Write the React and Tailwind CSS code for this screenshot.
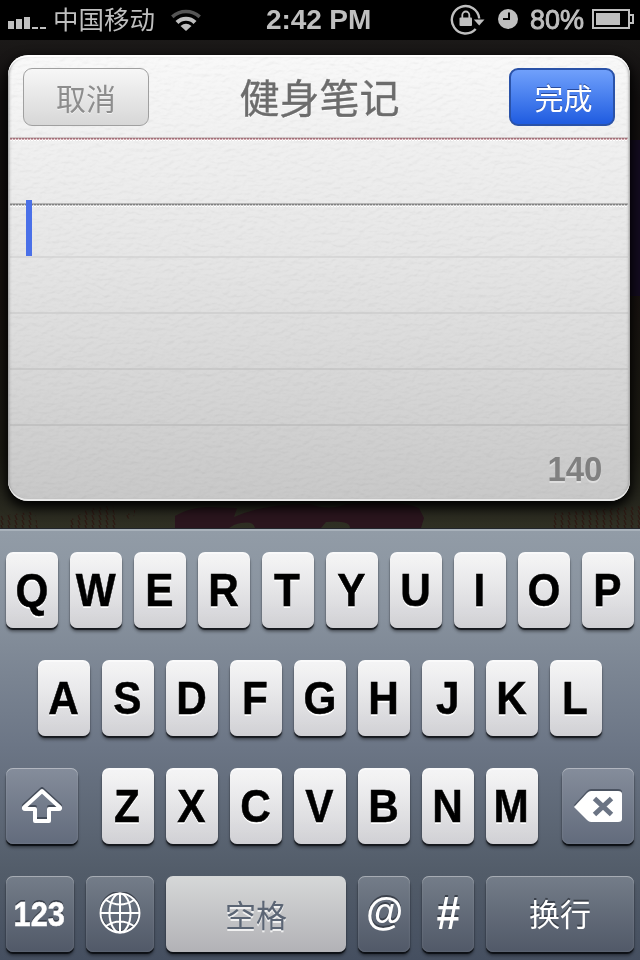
const LATIN = "font-['Liberation_Sans',Arial,sans-serif]";
const CJK = "font-['Noto_Sans_CJK_SC',sans-serif]";

function StatusBar() {
  return (
    <header className="flex h-10 shrink-0 items-center bg-black pl-2 pr-[6px] text-[#bfbfbf]">
      <div className="mt-[6px] flex h-3 w-[38px] shrink-0 items-end gap-[2px]">
        <i className="h-2 w-[6px] bg-[#bfbfbf]" />
        <i className="h-[10px] w-[6px] bg-[#bfbfbf]" />
        <i className="h-3 w-[6px] bg-[#bfbfbf]" />
        <i className="h-[2px] w-[6px] bg-[#bfbfbf]" />
        <i className="h-[2px] w-[6px] bg-[#bfbfbf]" />
      </div>
      <span className={`${CJK} ml-[7px] w-[105px] shrink-0 whitespace-nowrap pb-[4px] text-[25.5px] leading-[36px]`}>中国移动</span>
      <svg className="ml-3 shrink-0" width="32" height="24" viewBox="0 0 32 24" fill="none" stroke="#bfbfbf" strokeWidth="3.6">
        <path d="M2.3 8.8 A20.5 20.5 0 0 1 29.7 8.8" stroke="#555" />
        <path d="M7 14.5 A12.7 12.7 0 0 1 25 14.5" strokeWidth="4.2" />
        <path d="M16 23 L10.5 18 Q16 13.5 21.5 18Z" fill="#bfbfbf" stroke="none" />
      </svg>
      <time className={`${LATIN} ml-[64px] w-[107px] shrink-0 whitespace-nowrap text-[28px] font-bold leading-10 tracking-[-0.1px]`}>2:42 PM</time>
      <svg className="-mt-[2px] ml-[77px] mr-px shrink-0" width="36" height="32" viewBox="0 0 36 32" fill="none">
        <path d="M25.7 26 A13.7 13.7 0 1 1 29.2 15.5" stroke="#bfbfbf" strokeWidth="2.4" />
        <path d="M23.8 16.5 H34.5 L29.2 22.5Z" fill="#bfbfbf" />
        <rect x="9.5" y="14.5" width="12.5" height="8.5" rx="1" fill="#bfbfbf" />
        <path d="M12.3 15 V12 A3.5 3.5 0 0 1 19.3 12 V15" stroke="#bfbfbf" strokeWidth="1.8" />
      </svg>
      <svg className="-mt-[2px] ml-[11px] shrink-0" width="20" height="20" viewBox="0 0 20 20">
        <circle cx="10" cy="10" r="10" fill="#bfbfbf" />
        <path d="M11 3.5 V10 H5" fill="none" stroke="#000" strokeWidth="2" />
      </svg>
      <span className={`${LATIN} ml-[12px] w-[54px] shrink-0 whitespace-nowrap text-[27px] font-normal leading-10 [-webkit-text-stroke:0.9px_#bfbfbf]`}>80%</span>
      <svg className="-mt-[2px] ml-[8px] shrink-0" width="42" height="20" viewBox="0 0 42 20">
        <rect x="1" y="1" width="36" height="18" fill="none" stroke="#bfbfbf" strokeWidth="2" />
        <rect x="4" y="4" width="24" height="12" fill="#bfbfbf" />
        <path d="M38 6 H41 V14 H38" fill="none" stroke="#bfbfbf" strokeWidth="2" />
      </svg>
    </header>
  );
}

function Backdrop() {
  return (
    <svg className="absolute inset-0" width="640" height="488" viewBox="0 40 640 488">
      <defs>
        <linearGradient id="wall" x1="0" y1="0" x2="0" y2="1">
          <stop offset="0" stopColor="#1b1918" />
          <stop offset=".12" stopColor="#120f0f" />
          <stop offset=".5" stopColor="#17120f" />
          <stop offset=".85" stopColor="#1c1b13" />
          <stop offset=".94" stopColor="#26261d" />
          <stop offset="1" stopColor="#2f2f23" />
        </linearGradient>
        <pattern id="knit" width="7" height="5" patternUnits="userSpaceOnUse">
          <path d="M1 0 L3 5" stroke="#2c1a14" strokeWidth="1.4" />
        </pattern>
      </defs>
      <rect y="40" width="640" height="488" fill="url(#wall)" />
      <rect x="630" y="140" width="10" height="156" fill="#140c20" />
      <path d="M0 516 L35 511 L38 528 H0Z M70 520 L88 509 L113 505 L117 528 H70Z M123 517 L136 509 L133 520Z M555 513 L640 506 V528 H552Z" fill="url(#knit)" />
      <path d="M175 516 Q190 507 210 507 L237 508 L234 517 Q266 503 310 504 Q329 511 346 504 Q400 499 419 508 L424 518 L421 528 H350 Q350 520 326 522 L321 528 H255 Q253 519 234 525 L229 528 H175Z" fill="#2a151d" />
    </svg>
  );
}

function PaperGrain() {
  return (
    <svg className="pointer-events-none absolute inset-0 opacity-[0.11] mix-blend-multiply" width="622" height="446">
      <filter id="grain" x="0" y="0" width="100%" height="100%">
        <feTurbulence type="fractalNoise" baseFrequency="0.14 0.24" numOctaves="3" seed="8" />
        <feDiffuseLighting lightingColor="#fff" surfaceScale="2">
          <feDistantLight azimuth="250" elevation="62" />
        </feDiffuseLighting>
      </filter>
      <rect width="622" height="446" filter="url(#grain)" />
    </svg>
  );
}

function StitchLine({ red }) {
  return (
    <div className="relative mx-[2px] flex h-[4px] shrink-0 flex-col">
      <div className={red ? "h-px bg-[#d0c4c5]" : "h-px bg-[#b4b4b4]"} />
      <div
        className={
          red
            ? "h-px bg-[repeating-linear-gradient(90deg,#a0707a_0_2px,#c9aaad_2px_3px)]"
            : "h-px bg-[repeating-linear-gradient(90deg,#808080_0_2px,#b0b0b0_2px_3px)]"
        }
      />
      <div
        className={
          red
            ? "h-px bg-[repeating-linear-gradient(90deg,#d3a5ab_0_2px,#eee_2px_3px)]"
            : "h-px bg-[repeating-linear-gradient(90deg,#c4c4c4_0_2px,#eee_2px_3px)]"
        }
      />
      <div className="h-px bg-[repeating-linear-gradient(90deg,#fff_0_2px,#e4e4e4_2px_3px)]" />
    </div>
  );
}

function NoteCard() {
  return (
    <section className="relative ml-2 mt-[15px] flex h-[446px] w-[622px] flex-col overflow-hidden rounded-[20px] bg-[linear-gradient(#f9f9f9,#f1f1f1_18%,#e6e6e6_45%,#c8c8c8)] shadow-[0_5px_12px_2px_#000]">
      <PaperGrain />
      <div className="relative flex h-[82px] shrink-0 items-start justify-between pl-[15px] pr-[15px] pt-[13px]">
        <button className={`${CJK} h-[58px] w-[126px] rounded-[9px] border border-[#a0a0a0] bg-linear-to-b from-[#f7f7f7] to-[#d7d7d7] text-[30px] font-normal leading-[53px] text-[#8d8d8d] [text-shadow:0_1px_0_#f4f4f4]`}>
          取消
        </button>
        <h1 className={`${CJK} -mt-[3px] mr-[19px] text-[40px] font-normal leading-[62px] text-[#6c6c6c] [-webkit-text-stroke:0.4px_#6c6c6c] [text-shadow:0_1px_0_#fff]`}>健身笔记</h1>
        <button className={`${CJK} h-[58px] w-[106px] rounded-[9px] border-2 border-[#2a52a8] bg-linear-to-b from-[#70a0fb] to-[#1f5be0] pl-[3px] text-[29px] font-normal leading-[51px] text-white [text-shadow:0_-1px_0_#284b9e]`}>
          完成
        </button>
      </div>
      <StitchLine red />
      <div className="h-[62px] shrink-0" />
      <StitchLine />
      <div className="relative mx-[2px] flex grow flex-col">
        <div className="h-[51px] shrink-0 border-b-2 border-[#cfcfcf]/60" />
        <div className="h-14 shrink-0 border-b-2 border-[#c8c8c8]/60" />
        <div className="h-14 shrink-0 border-b-2 border-[#c0c0c0]/60" />
        <div className="h-14 shrink-0 border-b-2 border-[#b7b7b7]/60" />
        <div className={`${LATIN} flex grow items-center justify-end pr-[26px] pt-[11px] text-[35px] font-bold leading-10 text-[#808080] [text-shadow:0_2px_0_#dedede]`}>
          <span className="origin-right scale-x-[0.94]">140</span>
        </div>
        <div className="absolute -top-[7px] left-4 h-14 w-[6px] bg-[#4a70e8]" />
      </div>
      <div className="pointer-events-none absolute inset-0 rounded-[20px] shadow-[inset_0_2px_0_#fff,inset_0_-2px_0_#e8e8e8,inset_1px_0_3px_#999,inset_-1px_0_3px_#999]" />
    </section>
  );
}

function LetterRow({ letters, className }) {
  return (
    <div className={`flex h-[76px] gap-3 ${className}`}>
      {letters.split("").map((c) => (
        <button
          key={c}
          className={`${LATIN} flex h-[76px] w-[52px] justify-center rounded-[7px] bg-[linear-gradient(#ffffff40,#00000000),linear-gradient(#f2f2f3,#d0d0d4)] text-[46px] font-bold leading-[77px] text-black shadow-[0_2px_1px_#16191e,0_4px_3px_#0005,inset_0_2px_0_#fff8] [-webkit-text-stroke:0.5px_#000] [text-shadow:0_2px_0_#fff]`}
        >
          <span className="-ml-px scale-x-[0.92]">{c}</span>
        </button>
      ))}
    </div>
  );
}

function DarkKey({ className, children }) {
  return (
    <button
      className={`flex h-[76px] items-center justify-center rounded-[7px] text-white shadow-[0_2px_1px_#0c0f14,0_4px_3px_#0005,inset_0_1px_0_#fff5,inset_0_0_2px_#fff3] [text-shadow:0_-2px_0_#3b414b] ${className}`}
    >
      {children}
    </button>
  );
}

function Keyboard() {
  return (
    <section className="relative flex h-[432px] shrink-0 flex-col overflow-hidden border-t border-[#22262c] bg-[linear-gradient(#929ca7,#87919d_20%,#6c7686_50%,#525c69_80%,#454f60)] px-[6px] pt-[23px] shadow-[inset_0_2px_0_#a9b2bb]">
      <LetterRow letters="QWERTYUIOP" className="" />
      <LetterRow letters="ASDFGHJKL" className="mt-8 pl-8" />
      <div className="mt-8 flex justify-between">
        <DarkKey className="w-[72px] bg-linear-to-b from-[#858d9b] to-[#626b7c]">
          <svg width="42" height="38" viewBox="0 0 42 38" fill="none" strokeWidth="4" strokeLinejoin="round">
            <path d="M21 2 L3 18.5 Q2.5 20 4 20 H14 V32 H28 V20 H38 Q39.5 20 39 18.5Z" stroke="#444c59" />
            <path d="M21 4 L3 20.5 Q2.5 22 4 22 H14 V34 H28 V22 H38 Q39.5 22 39 20.5Z" stroke="#fff" />
          </svg>
        </DarkKey>
        <LetterRow letters="ZXCVBNM" className="" />
        <DarkKey className="w-[72px] bg-linear-to-b from-[#858d9b] to-[#626b7c]">
          <svg width="50" height="36" viewBox="0 0 50 36">
            <path d="M1 17 L14 3 Q16 1 18 1 H45 Q49 1 49 4 V29 Q49 32 45 32 H18 Q16 32 14 30Z" fill="#4b5361" />
            <path d="M1 19 L14 5 Q16 3 18 3 H45 Q49 3 49 6 V31 Q49 34 45 34 H18 Q16 34 14 32Z" fill="#fff" />
            <path d="M21.5 10.5 L38.5 26.5 M38.5 10.5 L21.5 26.5" stroke="#6b7484" strokeWidth="5" />
          </svg>
        </DarkKey>
      </div>
      <div className="mt-8 flex gap-3">
        <DarkKey className={`${LATIN} w-[68px] bg-linear-to-b from-[#747d89] to-[#515968] text-[35px] font-bold [-webkit-text-stroke:0.5px_#fff]`}>
          <span className="-ml-[2px] scale-x-[0.88]">123</span>
        </DarkKey>
        <DarkKey className="w-[68px] bg-linear-to-b from-[#747d89] to-[#515968]">
          <svg width="44" height="44" viewBox="0 0 44 44" fill="none" strokeWidth="2">
            <circle cx="22" cy="19.5" r="19.5" stroke="#3d434e" />
            <g stroke="#fff">
              <circle cx="22" cy="21" r="19.5" />
              <ellipse cx="22" cy="21" rx="10.5" ry="19.5" />
              <path d="M22 1.5 V40.5 M2.5 21 H41.5 M8 8 Q22 17 36 8 M8 34 Q22 25 36 34" />
            </g>
          </svg>
        </DarkKey>
        <button className={`${CJK} h-[76px] w-[180px] rounded-[7px] bg-linear-to-b from-[#d6d8d8] to-[#b2b2b6] text-[31px] leading-[74px] text-[#5b6574] shadow-[0_2px_1px_#0c0f14,0_4px_3px_#0005] [text-shadow:0_2px_0_#f0f0f0]`}>
          空格
        </button>
        <DarkKey className={`${LATIN} w-[52px] bg-linear-to-b from-[#747d89] to-[#515968] pb-[4px] text-[38px] font-bold italic`}>@</DarkKey>
        <DarkKey className={`${LATIN} w-[52px] bg-linear-to-b from-[#747d89] to-[#515968] pb-[2px] text-[46px] font-bold italic`}>
          <span className="scale-x-[0.92]">#</span>
        </DarkKey>
        <DarkKey className={`${CJK} w-[148px] bg-linear-to-b from-[#747d89] to-[#515968] pb-[2px] text-[31px]`}>换行</DarkKey>
      </div>
    </section>
  );
}

export default function App() {
  return (
    <main className="flex h-[960px] w-[640px] flex-col overflow-hidden bg-black">
      <StatusBar />
      <div className="relative h-[488px] shrink-0 overflow-hidden">
        <Backdrop />
        <NoteCard />
      </div>
      <Keyboard />
    </main>
  );
}
